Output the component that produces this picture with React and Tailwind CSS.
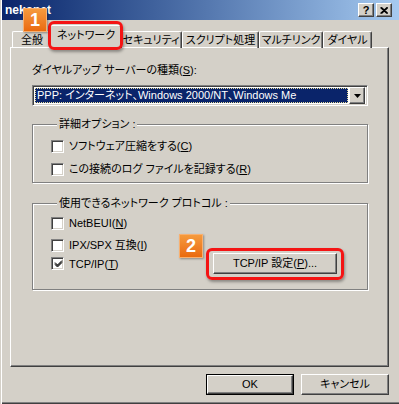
import React from 'react';

const FACE = 'bg-[#d4d0c8]';
const UI = { fontFamily: "'Liberation Sans', 'Noto Sans CJK JP', sans-serif", fontFeatureSettings: "'palt'" };
const SANS = { fontFamily: "'Liberation Sans', Arial, sans-serif" };

const TABS = [
  { label: '全般', w: 'w-[40px]' },
  { label: 'ネットワーク', w: 'w-[66px]', active: true },
  { label: 'セキュリティ', w: 'w-[62px]' },
  { label: 'スクリプト処理', w: 'w-[77px]' },
  { label: 'マルチリンク', w: 'w-[64px]' },
  { label: 'ダイヤル', w: 'w-[49px]' },
];

function Raised({ className = '', children, def }) {
  return (
    <div className={`${def ? 'border border-black' : ''} ${className}`}>
      <div className="h-full w-full bg-[#d4d0c8] border-t border-l border-t-white border-l-white border-r border-b border-r-[#404040] border-b-[#404040] shadow-[inset_-1px_-1px_0_#808080] flex items-center justify-center">
        {children}
      </div>
    </div>
  );
}

function Check({ checked }) {
  return (
    <div className="w-[13px] h-[13px] shrink-0 bg-white border-t border-l border-t-[#808080] border-l-[#808080] border-b border-r border-b-white border-r-white shadow-[inset_1px_1px_0_#404040,inset_-1px_-1px_0_#d4d0c8] flex items-center justify-center">
      {checked && (
        <svg width="9" height="9" viewBox="0 0 9 9" className="ml-[1px]">
          <path d="M1 3.5 L3.5 6 L8 1.5 M1 4.5 L3.5 7 L8 2.5 M1 5.5 L3.5 8 L8 3.5" stroke="#000" strokeWidth="1" fill="none" />
        </svg>
      )}
    </div>
  );
}

function Row({ checked, children, className = '' }) {
  return (
    <div className={`flex items-center gap-[5px] h-[14px] ${className}`}>
      <Check checked={checked} />
      <span className="text-[11px] leading-[14px] text-black whitespace-nowrap">{children}</span>
    </div>
  );
}

function Group({ legend, className = '', children }) {
  return (
    <fieldset className={`border border-[#808080] shadow-[1px_1px_0_#fff,inset_1px_1px_0_#fff] w-[336px] ${className}`}>
      <legend className="ml-[6px] px-[2px] bg-[#d4d0c8] text-[11px] leading-[14px] text-black">{legend}</legend>
      {children}
    </fieldset>
  );
}

function Badge({ n, className }) {
  return (
    <div className={`absolute w-[24px] h-[24px] bg-gradient-to-b from-[#f59a3c] to-[#ea6a0c] border border-[#f8b070] shadow-[1px_1px_2px_rgba(0,0,0,0.35)] flex items-center justify-center text-white font-bold text-[18px] leading-none ${className}`} style={SANS}>
      {n}
    </div>
  );
}

export default function App() {
  return (
    <div className={`relative w-[399px] h-[404px] ${FACE} overflow-hidden shadow-[inset_1px_0_0_#d4d0c8,inset_2px_0_0_#fff,inset_0_-1px_0_#404040,inset_0_-2px_0_#808080]`} style={UI}>
      {/* title bar */}
      <div className="ml-[2px] h-[20px] bg-gradient-to-r from-[#0a246a] to-[#a6caf0] flex items-center pl-[3px] pr-[7px]">
        <span className="text-white font-bold text-[12px] leading-none" style={SANS}>nekonet</span>
        <div className="ml-auto flex gap-[2px]">
          <Raised className="w-[16px] h-[14px]">
            <span className="text-[11px] font-bold leading-none text-black" style={SANS}>?</span>
          </Raised>
          <Raised className="w-[16px] h-[14px]">
            <svg width="8" height="7" viewBox="0 0 8 7">
              <path d="M0.5 0.5 L7 6.5 M1.5 0.5 L8 6.5 M7 0.5 L0.5 6.5 M8 0.5 L1.5 6.5" stroke="#000" strokeWidth="1.1" fill="none" />
            </svg>
          </Raised>
        </div>
      </div>

      {/* tabs */}
      <div className="mt-[8px] pl-[12px] flex items-end h-[20px] relative z-10">
        {TABS.map((t) =>
          t.active ? (
            <div key={t.label} className={`${t.w} -mx-[2px] box-content px-[2px] h-[20px] bg-[#d4d0c8] border-t border-l border-t-white border-l-white border-r border-r-[#404040] shadow-[inset_-1px_0_0_#808080] rounded-t-[2px] flex justify-center pt-[2px] text-[11px] leading-[14px] text-black whitespace-nowrap`}>
              {t.label}
            </div>
          ) : (
            <div key={t.label} className={`${t.w} h-[17px] border-t border-l border-t-white border-l-white border-r border-r-[#404040] shadow-[inset_-1px_0_0_#808080] rounded-t-[2px] flex justify-center pt-[1px] text-[11px] leading-[14px] text-black whitespace-nowrap`}>
              {t.label}
            </div>
          )
        )}
      </div>

      {/* panel */}
      <div className="-mt-[1px] mx-[10px] h-[320px] border-t border-l border-t-white border-l-white border-r border-b border-r-[#404040] border-b-[#404040] shadow-[inset_-1px_-1px_0_#808080] pl-[21px] pt-[15px]">
        <div className="text-[11px] leading-[14px] text-black">
          ダイヤルアップ サーバーの種類(<u>S</u>):
        </div>
        <div className="mt-[8px] w-[336px] h-[21px] bg-white border-t border-l border-t-[#808080] border-l-[#808080] border-b border-r border-b-white border-r-white shadow-[inset_1px_1px_0_#404040,inset_-1px_-1px_0_#d4d0c8] flex items-center pl-[2px] pr-[2px]">
          <div className="flex-1 h-[15px] bg-[#0a246a] border border-dotted border-[#e8dc9a] text-white text-[11px] leading-[13px] pl-[1px] whitespace-nowrap">
            PPP: インターネット、Windows 2000/NT、Windows Me
          </div>
          <Raised className="w-[16px] h-[17px] ml-[1px]">
            <svg width="7" height="4" viewBox="0 0 7 4">
              <path d="M0 0 H7 L3.5 4 Z" fill="#000" />
            </svg>
          </Raised>
        </div>

        <Group legend="詳細オプション :" className="mt-[11px] h-[66px] pl-[18px] pt-[8px]">
          <Row>ソフトウェア圧縮をする(<u>C</u>)</Row>
          <Row className="mt-[9px]">この接続のログ ファイルを記録する(<u>R</u>)</Row>
        </Group>

        <Group legend="使用できるネットワーク プロトコル :" className="mt-[13px] h-[94px] pl-[18px] pt-[6px]">
          <Row>NetBEUI(<u>N</u>)</Row>
          <Row className="mt-[8px]">IPX/SPX 互換(<u>I</u>)</Row>
          <div className="mt-[1px] flex items-center h-[21px] pr-[30px]">
            <Row checked>TCP/IP(<u>T</u>)</Row>
            <Raised className="ml-auto w-[124px] h-[21px]">
              <span className="text-[11px] leading-none text-black">TCP/IP 設定(<u>P</u>)...</span>
            </Raised>
          </div>
        </Group>
      </div>

      {/* dialog buttons */}
      <div className="mt-[7px] mr-[10px] flex justify-end gap-[7px]">
        <Raised def className="w-[88px] h-[21px]">
          <span className="text-[11px] leading-none text-black">OK</span>
        </Raised>
        <Raised className="w-[88px] h-[21px]">
          <span className="text-[11px] leading-none text-black">キャンセル</span>
        </Raised>
      </div>

      {/* annotations */}
      <div className="absolute left-[48px] top-[21px] w-[75px] h-[29px] rounded-[6px] border-[3px] border-[#f41414] shadow-[1px_2px_3px_rgba(0,0,0,0.35)] z-20" />
      <Badge n="1" className="left-[23px] top-[8px] z-30" />
      <div className="absolute left-[206px] top-[248px] w-[138px] h-[32px] rounded-[6px] border-[3px] border-[#f41414] shadow-[1px_2px_3px_rgba(0,0,0,0.35)] z-20" />
      <Badge n="2" className="left-[179px] top-[234px] z-30" />
    </div>
  );
}
